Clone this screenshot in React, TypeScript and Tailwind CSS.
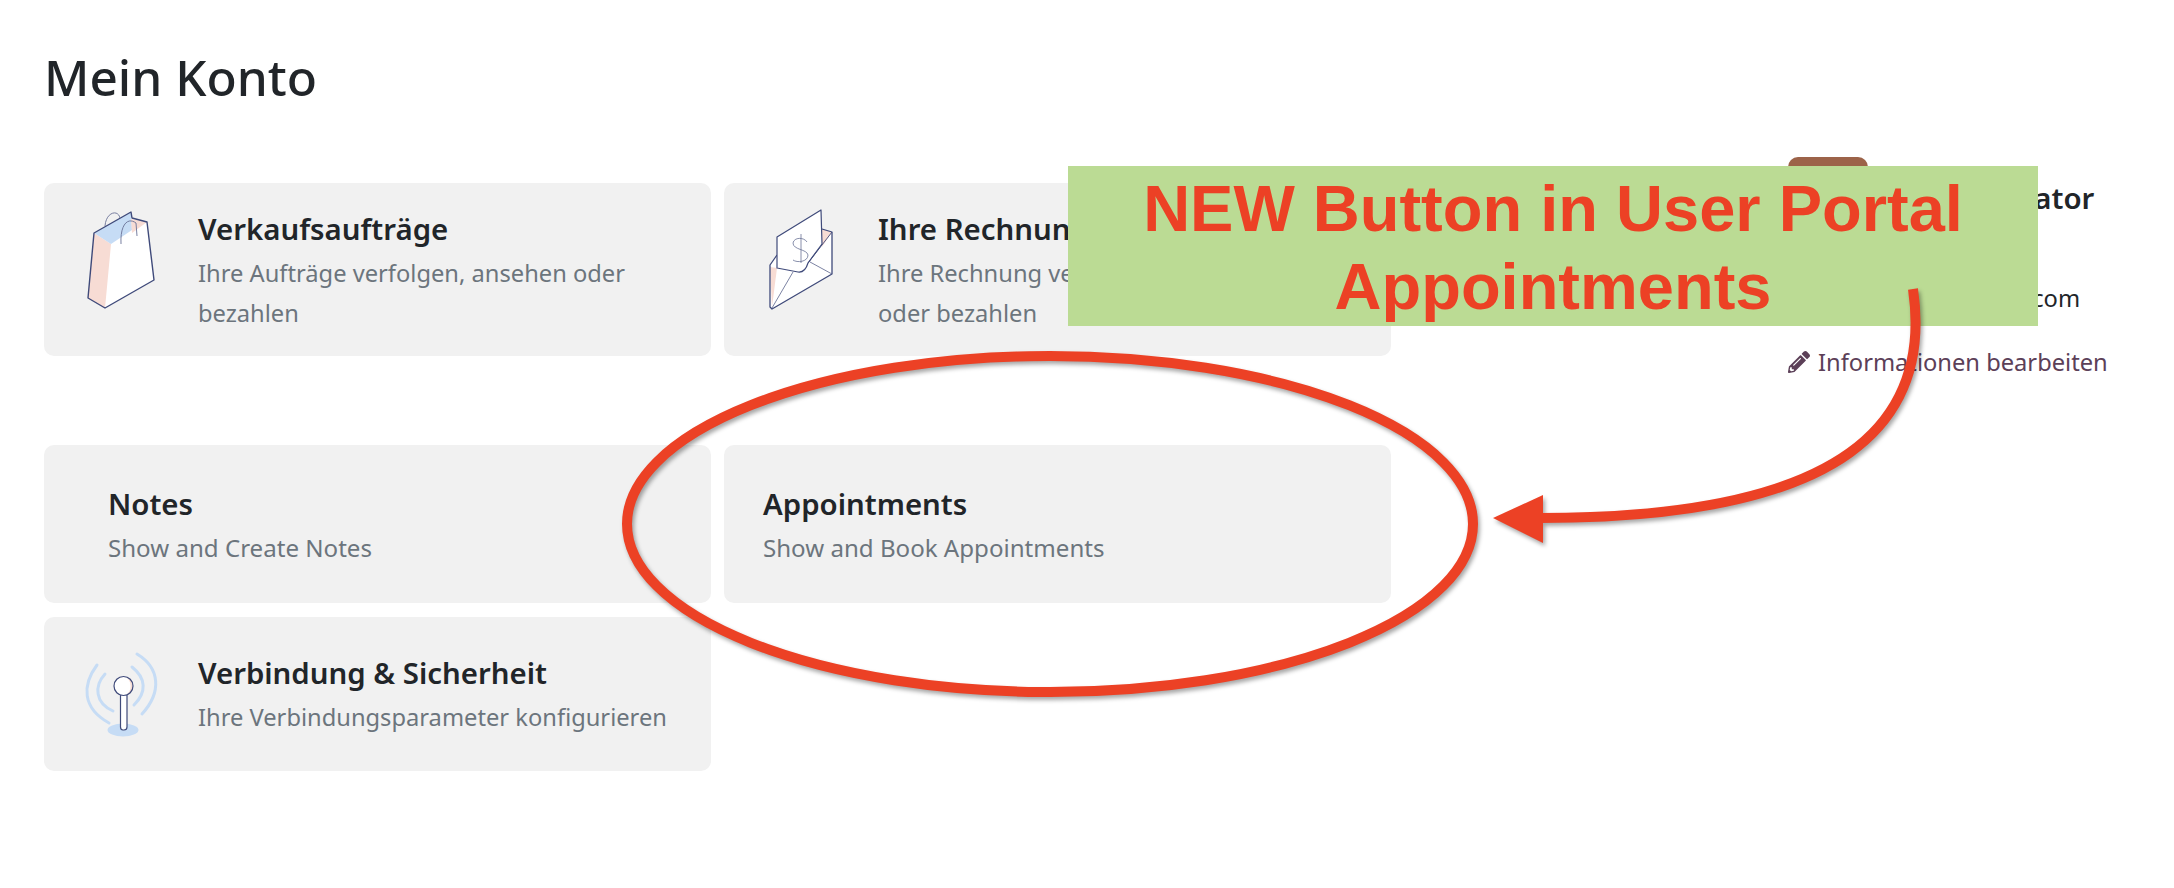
import React from 'react';
import { FaPencilAlt } from 'react-icons/fa';

const font = { fontFamily: '"Noto Sans", sans-serif' };

const BagIcon = () => (
  <svg viewBox="0 0 100 120" className="w-[100px] h-[120px] shrink-0">
    <path d="M24 33 L61 12 L62 18 L77 22 L84 80 L35 108 L18 98 Z" fill="#ffffff" />
    <path d="M24 33 L18 98 L35 108 L41 44 Z" fill="#f7dcd4" />
    <path d="M24 33 L61 12 L62 30 L41 44 Z" fill="#c6dcf5" />
    <path d="M61 19 L77 22 L62 33 Z" fill="#f7dcd4" />
    <path d="M24 33 L61 12 L62 18 L77 22 L84 80 L35 108 L18 98 Z" fill="none" stroke="#3f4a7a" strokeWidth="1.4" strokeLinejoin="round" />
    <path d="M35 26 C36 12 48 9 50 18" fill="none" stroke="#6a7296" strokeWidth="0.9" />
    <path d="M51 44 C50 24 58 17 66 23 L67 36" fill="none" stroke="#6a7296" strokeWidth="0.9" />
  </svg>
);

const EnvelopeIcon = () => (
  <svg viewBox="-10 0 100 120" className="w-[100px] h-[120px] shrink-0">
    <path d="M10 65 L17 55 L62 29 L72 32 L72 74 L12 109 L10 107 Z" fill="#ffffff" />
    <path d="M62 29 L72 32 L62 47 Z" fill="#f7dcd4" />
    <path d="M10 67 L17 68 L12 107 Z" fill="#f7dcd4" />
    <path d="M17 55 L10 65 L10 107 L12 109 L72 74 L72 32 L62 29" fill="none" stroke="#3f4a7a" strokeWidth="1.3" strokeLinejoin="round" />
    <path d="M17 37 L61 10 L62 44 L48 63 Q45 73 38 72 L17 68 Z" fill="#ffffff" stroke="#3f4a7a" strokeWidth="1.2" strokeLinejoin="round" />
    <path d="M72 32 L48 63" fill="none" stroke="#3f4a7a" strokeWidth="0.9" />
    <path d="M33 72 L12 108 M50 62 L72 74" fill="none" stroke="#5a638c" strokeWidth="0.8" />
    <path d="M47 42 C44 37 34 37 33 43 C33 50 47 49 48 55 C48 62 37 63 33 60 M41 34 L41 63" fill="none" stroke="#6a7296" strokeWidth="0.8" />
  </svg>
);

const AntennaIcon = () => (
  <svg viewBox="0 0 100 110" className="w-[100px] h-[110px] shrink-0">
    <ellipse cx="53" cy="90" rx="15.5" ry="6.5" fill="#c6dcf5" />
    <g fill="none" stroke="#c6dcf5" strokeWidth="3" strokeLinecap="round">
      <path d="M27 25 C12 45 12 68 39 83" />
      <path d="M35 34 C24 46 25 63 43 71" />
      <path d="M62 27 C76 38 77 52 64 65" />
      <path d="M67 14 C90 28 92 52 72 74" />
    </g>
    <path d="M50.5 55 L57 55 L57 87 Q57 90 54 90 L53 90 Q50.5 90 50.5 87 Z" fill="#ffffff" stroke="#3f4a7a" strokeWidth="1.2" />
    <circle cx="53.5" cy="46" r="9.5" fill="#ffffff" />
    <path d="M56 37 A9.5 9.5 0 0 1 56 55 A11 11 0 0 0 56 37 Z" fill="#f7dcd4" />
    <circle cx="53.5" cy="46" r="9.5" fill="none" stroke="#3f4a7a" strokeWidth="1.2" />
  </svg>
);

const cardTitle = 'text-[29.4px] leading-[40px] font-semibold text-[#212529]';
const cardText = 'text-[23.7px] leading-[40px] text-[#6c757d]';
const shortText = 'text-[24.1px] leading-[40px] text-[#6c757d] mt-[4px]';

export default function App() {
  return (
    <div className="relative w-full h-[888px] overflow-hidden bg-white" style={font}>
      <div className="flex pl-[44px]">
        <div className="w-[1347px] shrink-0">
          <h1 className="pt-[45px] h-[183px] text-[49.5px] leading-[64px] font-medium text-[#212529]">Mein Konto</h1>

          <div className="grid grid-cols-2 gap-[13px] mb-[89px]">
            <a className="flex h-[173px] rounded-[10px] bg-[#f1f1f1] pl-[26px] pt-[17px]">
              <BagIcon />
              <div className="ml-[28px] pt-[9px]">
                <div className={cardTitle}>Verkaufsaufträge</div>
                <div className={`${cardText} mt-[4px]`}>Ihre Aufträge verfolgen, ansehen oder<br />bezahlen</div>
              </div>
            </a>
            <a className="flex h-[173px] rounded-[10px] bg-[#f1f1f1] pl-[26px] pt-[17px]">
              <EnvelopeIcon />
              <div className="ml-[28px] pt-[9px]">
                <div className={cardTitle}>Ihre Rechnungen</div>
                <div className={`${cardText} mt-[4px]`}>Ihre Rechnung verfolgen, herunterladen<br />oder bezahlen</div>
              </div>
            </a>
          </div>

          <div className="grid grid-cols-2 gap-x-[13px] gap-y-[14px]">
            <a className="flex flex-col justify-center h-[158px] rounded-[10px] bg-[#f1f1f1] pl-[64px] pt-[4px]">
              <div className={cardTitle}>Notes</div>
              <div className={shortText}>Show and Create Notes</div>
            </a>
            <a className="flex flex-col justify-center h-[158px] rounded-[10px] bg-[#f1f1f1] pl-[39px] pt-[4px]">
              <div className={cardTitle}>Appointments</div>
              <div className={shortText}>Show and Book Appointments</div>
            </a>
            <a className="flex h-[154px] rounded-[10px] bg-[#f1f1f1] pl-[26px] pt-[23px]">
              <AntennaIcon />
              <div className="ml-[28px] pt-[13px]">
                <div className={cardTitle}>Verbindung &amp; Sicherheit</div>
                <div className={`${cardText} mt-[4px]`}>Ihre Verbindungsparameter konfigurieren</div>
              </div>
            </a>
          </div>
        </div>

        <aside className="ml-[397px] pt-[157px] w-[340px] shrink-0">
          <div className="flex items-start gap-[26px]">
            <div className="w-[80px] h-[80px] rounded-[10px] bg-[#9c6349]" />
            <div className={`${cardTitle} pt-[21px]`}>Administrator</div>
          </div>
          <div className="mt-[41px] -ml-[6px] text-[23.7px] leading-[40px] text-[#212529]">admin@yourcompany.com</div>
          <a className="flex items-center gap-[8px] mt-[24px] text-[23.7px] leading-[40px] text-[#5c4058]">
            <FaPencilAlt className="w-[22px] h-[22px]" />
            Informationen bearbeiten
          </a>
        </aside>
      </div>

      {/* annotation on top of the screenshot */}
      <div className="absolute left-[1068px] top-[166px] w-[970px] h-[160px] pt-[3px] bg-[#bbdb94] flex items-center justify-center text-center text-[65px] leading-[78px] font-bold text-[#ec4125]" style={{ fontFamily: '"Liberation Sans", Arial, sans-serif' }}>
        NEW Button in User Portal<br />Appointments
      </div>
      <svg className="absolute inset-0 w-full h-full drop-shadow-[2px_3px_2px_rgba(0,0,0,0.35)]" viewBox="0 0 2174 888" fill="none">
        <ellipse cx="1050" cy="524" rx="423" ry="168" stroke="#ec4125" strokeWidth="10" />
        <path d="M1913 289 C1932 420 1850 518 1540 518" stroke="#ec4125" strokeWidth="10" />
        <path d="M1493 518 L1543 495 L1543 543 Z" fill="#ec4125" />
      </svg>
    </div>
  );
}
